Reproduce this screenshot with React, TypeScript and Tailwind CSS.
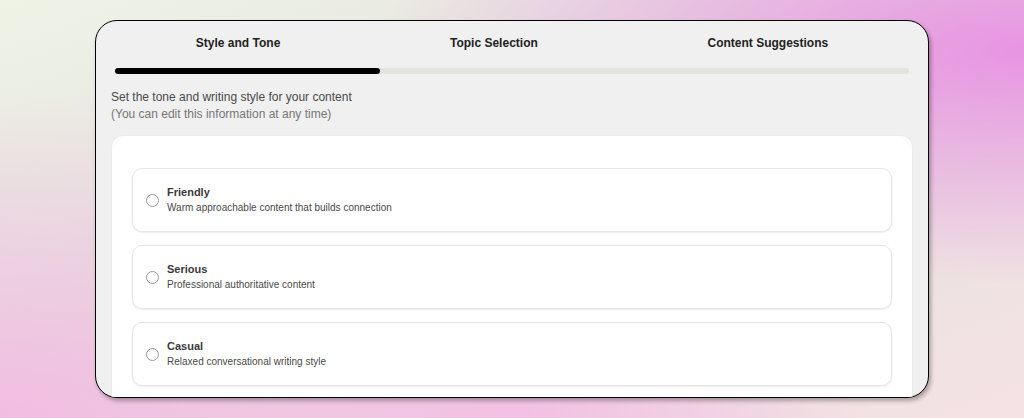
const steps = ['Style and Tone', 'Topic Selection', 'Content Suggestions'];

const tones = [
  { title: 'Friendly', desc: 'Warm approachable content that builds connection' },
  { title: 'Serious', desc: 'Professional authoritative content' },
  { title: 'Casual', desc: 'Relaxed conversational writing style' },
];

function ToneOption({ title, desc }: { title: string; desc: string }) {
  return (
    <label className="flex h-[64px] cursor-pointer items-center gap-2 rounded-[10px] border border-[#e6e6e6] bg-white px-[13px] shadow-[0_1px_2px_rgba(0,0,0,0.08)]">
      <span className="h-[13px] w-[13px] shrink-0 rounded-full border border-[#9a9a9a] bg-white" />
      <span className="flex flex-col">
        <span className="text-[11px] font-bold leading-[15px] text-[#3a3a3a]">{title}</span>
        <span className="text-[10px] leading-[15px] text-[#4a4a4a]">{desc}</span>
      </span>
    </label>
  );
}

export default function App() {
  return (
    <div
      className="h-screen w-full overflow-hidden bg-[radial-gradient(ellipse_at_100%_12%,#e894e2_0%,transparent_45%),radial-gradient(ellipse_at_0%_100%,#f2bde2_0%,transparent_55%),radial-gradient(ellipse_at_50%_100%,#f2c3e4_0%,transparent_50%),linear-gradient(160deg,#eff3e6_0%,#e3e2dd_45%,#f5e2e4_100%)] pt-5"
      style={{ fontFamily: '"Liberation Sans", Arial, sans-serif' }}
    >
      <div className="mx-auto h-[378px] w-[834px] overflow-hidden rounded-[22px] border border-black bg-[#f0f0f0] px-[15px] pt-[14px] shadow-[2px_3px_4px_rgba(0,0,0,0.3)]">
        <div className="flex">
          {steps.map((s) => (
            <div key={s} className="flex-auto text-center text-[12px] font-bold leading-4 text-[#222]">
              {s}
            </div>
          ))}
        </div>

        <div className="mx-[4px] mt-[17px] h-1.5 rounded-full bg-[#e2e2de]">
          <div className="h-full w-1/3 rounded-full bg-black" />
        </div>

        <div className="mt-[15px] text-[12px] leading-[17px]">
          <p className="text-[#4a4a4a]">Set the tone and writing style for your content</p>
          <p className="text-[#777]">(You can edit this information at any time)</p>
        </div>

        <div className="mt-[12px] rounded-[12px] border border-[#ececec] bg-white px-5 pb-6 pt-8">
          <div className="flex flex-col gap-[13px]">
            {tones.map((t) => (
              <ToneOption key={t.title} title={t.title} desc={t.desc} />
            ))}
          </div>
        </div>
      </div>
    </div>
  );
}
